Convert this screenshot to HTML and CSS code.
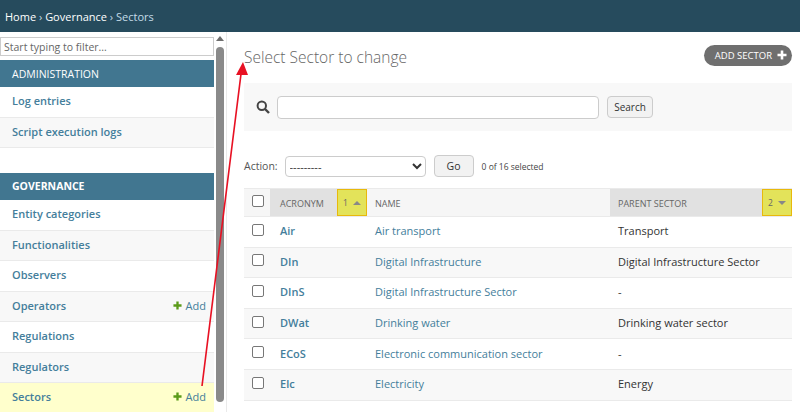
FILE: index.html
```html
<!DOCTYPE html>
<html>
<head lang="en">
    <meta charset="UTF-8">
    <title>Select Sector to change</title>
    <link rel="stylesheet" href="styles.css">
</head>
<body>
<div class="breadcrumbs"><a>Home</a> › <a>Governance</a> › <span>Sectors</span></div>
<div class="page">
    <div class="sidebar">
        <div class="nav">
            <input class="nav-filter" type="text" placeholder="Start typing to filter...">
            <div class="caption">ADMINISTRATION</div>
            <div class="nav-row"><a>Log entries</a></div>
            <div class="nav-row alt"><a>Script execution logs</a></div>
            <div class="caption second">GOVERNANCE</div>
            <div class="nav-row"><a>Entity categories</a></div>
            <div class="nav-row alt"><a>Functionalities</a></div>
            <div class="nav-row"><a>Observers</a></div>
            <div class="nav-row alt"><a>Operators</a><a class="add"><svg class="plus green" viewBox="0 0 10 10"><path d="M5 0.5v9M0.5 5h9"/></svg>Add</a></div>
            <div class="nav-row"><a>Regulations</a></div>
            <div class="nav-row alt"><a>Regulators</a></div>
            <div class="nav-row current"><a>Sectors</a><a class="add"><svg class="plus green" viewBox="0 0 10 10"><path d="M5 0.5v9M0.5 5h9"/></svg>Add</a></div>
        </div>
        <div class="scrollbar">
            <div class="scroll-up"></div>
            <div class="scroll-thumb"></div>
        </div>
    </div>
    <div class="content">
        <div class="title-row">
            <h1>Select Sector to change</h1>
            <a class="addlink">ADD SECTOR<svg class="plus white" viewBox="0 0 10 10"><path d="M5 0.5v9M0.5 5h9"/></svg></a>
        </div>
        <div class="toolbar">
            <svg class="search-icon" width="14" height="14" viewBox="0 0 14 14">
                <circle cx="5.8" cy="5.8" r="4.2" fill="none" stroke="#444" stroke-width="2"/>
                <path d="M9 9l4 4" stroke="#444" stroke-width="2.4"/>
            </svg>
            <input class="search-box" type="text">
            <button class="btn">Search</button>
        </div>
        <div class="actions">
            <label>Action:</label>
            <select class="action-select"><option>---------</option></select>
            <button class="btn">Go</button>
            <span class="counter">0 of 16 selected</span>
        </div>
        <table class="results">
            <thead>
                <tr>
                    <th class="check"><input type="checkbox"></th>
                    <th class="acronym sorted">ACRONYM</th>
                    <th class="sort-cell"><span class="mark">1 <i class="up"></i></span></th>
                    <th class="name">NAME</th>
                    <th class="parent sorted">PARENT SECTOR</th>
                    <th class="sort-cell"><span class="mark">2 <i class="down"></i></span></th>
                </tr>
            </thead>
            <tbody>
                <tr>
                    <td class="check"><input type="checkbox"></td>
                    <td colspan="2"><a class="code">Air</a></td>
                    <td class="text"><a>Air transport</a></td>
                    <td class="text" colspan="2">Transport</td>
                </tr>
                <tr class="alt">
                    <td class="check"><input type="checkbox"></td>
                    <td colspan="2"><a class="code">DIn</a></td>
                    <td class="text"><a>Digital Infrastructure</a></td>
                    <td class="text" colspan="2">Digital Infrastructure Sector</td>
                </tr>
                <tr>
                    <td class="check"><input type="checkbox"></td>
                    <td colspan="2"><a class="code">DInS</a></td>
                    <td class="text"><a>Digital Infrastructure Sector</a></td>
                    <td class="text" colspan="2">-</td>
                </tr>
                <tr class="alt">
                    <td class="check"><input type="checkbox"></td>
                    <td colspan="2"><a class="code">DWat</a></td>
                    <td class="text"><a>Drinking water</a></td>
                    <td class="text" colspan="2">Drinking water sector</td>
                </tr>
                <tr>
                    <td class="check"><input type="checkbox"></td>
                    <td colspan="2"><a class="code">ECoS</a></td>
                    <td class="text"><a>Electronic communication sector</a></td>
                    <td class="text" colspan="2">-</td>
                </tr>
                <tr class="alt">
                    <td class="check"><input type="checkbox"></td>
                    <td colspan="2"><a class="code">Elc</a></td>
                    <td class="text"><a>Electricity</a></td>
                    <td class="text" colspan="2">Energy</td>
                </tr>
            </tbody>
        </table>
    </div>
</div>
<svg class="arrow" width="800" height="412" viewBox="0 0 800 412">
    <path d="M202 386L241 74" stroke="#e81123" stroke-width="1.6" fill="none"/>
    <path d="M243 62L236 75L248 75Z" fill="#e81123"/>
</svg>
</body>
</html>
```

FILE: styles.css
```css
* {
    box-sizing: border-box;
}
html, body {
    margin: 0;
    height: 412px;
    overflow: hidden;
}
body {
    font-family: "Open Sans", "Noto Sans", sans-serif;
    font-size: 11px;
    color: #333;
    background-color: #fff;
    position: relative;
}
a {
    color: #447e9b;
}
.breadcrumbs {
    height: 32px;
    line-height: 34px;
    padding-left: 5px;
    background-color: #264b5d;
    color: #c4dce8;
    font-size: 11px;
}
.breadcrumbs a {
    color: #fff;
}
.breadcrumbs span {
    color: #c4dce8;
}
.page {
    display: flex;
    height: 380px;
}

/* left nav */
.sidebar {
    display: flex;
    width: 227px;
    border-right: 1px solid #eaeaea;
    overflow: hidden;
}
.nav {
    width: 214px;
    padding-top: 5px;
    flex-shrink: 0;
}
.nav-filter {
    display: block;
    width: 214px;
    height: 19px;
    margin-bottom: 4px;
    padding: 0 3px;
    border: 1px solid #ccc;
    font-family: inherit;
    font-size: 10.5px;
}
.nav-filter::placeholder {
    color: #666;
}
.caption {
    height: 27px;
    line-height: 28px;
    padding-left: 12px;
    background-color: #417690;
    color: #fff;
    font-size: 10.5px;
}
.caption.second {
    margin-top: 25px;
    line-height: 27px;
    font-weight: 700;
}
.nav-row {
    display: flex;
    justify-content: space-between;
    height: 30.5px;
    line-height: 28px;
    padding: 0 8px 0 12px;
    border-bottom: 1px solid #eaeaea;
    font-weight: 600;
    background-color: #fff;
}
.nav-row.alt {
    background-color: #f8f8f8;
}
.nav-row.current {
    background-color: #ffffcc;
    border-bottom: 0;
}
.add {
    font-weight: 400;
}
.plus {
    width: 9px;
    height: 9px;
    fill: none;
    stroke-width: 2.6;
}
.plus.green {
    stroke: #5b9b1a;
    margin-right: 4px;
    vertical-align: 0;
}
.plus.white {
    stroke: #fff;
    width: 10px;
    height: 10px;
    margin-left: 5px;
    vertical-align: -1px;
}
.scrollbar {
    width: 12px;
    padding: 4px 2px 0;
}
.scroll-up {
    width: 0;
    height: 0;
    margin: 0 auto 6px;
    border-left: 4px solid transparent;
    border-right: 4px solid transparent;
    border-bottom: 5px solid #6e6e6e;
}
.scroll-thumb {
    width: 8px;
    height: 355px;
    border-radius: 4px;
    background-color: #8a8a8a;
}

/* main column */
.content {
    flex: 1;
    padding: 13px 8px 0 17px;
    min-width: 0;
}
.title-row {
    display: flex;
    justify-content: space-between;
    height: 38px;
}
h1 {
    margin: 0;
    font-size: 15.5px;
    font-weight: 300;
    line-height: 24px;
    color: #666;
}
.addlink {
    height: 21px;
    line-height: 21px;
    padding: 0 5px 0 11px;
    border-radius: 11px;
    background-color: #6f6f6f;
    color: #fff;
    font-size: 9.5px;
}
.toolbar {
    display: flex;
    align-items: center;
    height: 48px;
    padding-left: 12px;
    background-color: #f8f8f8;
}
.search-icon {
    margin-right: 7px;
}
.search-box {
    width: 322px;
    height: 23px;
    border: 1px solid #ccc;
    border-radius: 4px;
}
.btn {
    height: 22px;
    padding: 0 6px;
    border: 1px solid #ccc;
    border-radius: 4px;
    background-color: #f2f2f2;
    font-family: inherit;
    font-size: 10px;
    color: #333;
}
.toolbar .btn {
    width: 46px;
    margin-left: 8px;
}
.actions {
    display: flex;
    align-items: center;
    height: 22px;
    margin-top: 24px;
    font-size: 10.5px;
    color: #555;
}
.action-select {
    width: 141px;
    height: 21px;
    margin: 0 8px 0 7px;
    border: 1px solid #ccc;
    border-radius: 4px;
    background-color: #fff;
    font-family: inherit;
    font-size: 11px;
    color: #333;
}
.actions .btn {
    width: 40px;
    font-size: 10.5px;
}
.counter {
    margin-left: 8px;
    font-size: 8.5px;
    color: #444;
}
.results {
    width: 548px;
    margin-top: 11px;
    border-collapse: collapse;
    table-layout: fixed;
}
.results th {
    height: 27px;
    padding: 1px 0 0 10px;
    background-color: #f6f6f6;
    border-top: 1px solid #eaeaea;
    border-bottom: 1px solid #eaeaea;
    font-size: 9px;
    font-weight: 400;
    color: #666;
    text-align: left;
}
.results th.sorted {
    background-color: #e1e1e1;
}
.results .check {
    width: 26px;
    padding: 0 0 4px 8px;
}
.results input[type="checkbox"] {
    display: block;
    width: 12px;
    height: 12px;
    margin: 0;
    appearance: none;
    border: 1px solid #777;
    border-radius: 2px;
    background-color: #fff;
}
.results .acronym {
    width: 67px;
}
.results .name {
    width: 243px;
    padding-left: 8px;
}
.results .parent {
    width: 152px;
    padding-left: 8px;
}
.results th.sort-cell {
    width: 30px;
    padding: 0;
    background-color: #e1e1e1;
}
.mark {
    display: block;
    height: 27px;
    line-height: 25px;
    padding-left: 5px;
    border: 1px solid #e8b90c;
    background-color: #e3e35a;
    font-size: 8.5px;
    color: #666;
}
.mark i {
    display: inline-block;
    width: 0;
    height: 0;
    margin-left: 3px;
    border-left: 4px solid transparent;
    border-right: 4px solid transparent;
    vertical-align: 1px;
}
.mark .up {
    border-bottom: 4px solid #888;
}
.mark .down {
    border-top: 4px solid #888;
}
.results td {
    height: 30.6px;
    padding: 0 0 2px 10px;
    border-bottom: 1px solid #eaeaea;
    font-size: 11px;
}
.results td.text {
    padding-left: 8px;
}
.results td.check {
    padding: 0 0 4px 8px;
}
.results tr.alt td {
    background-color: #f8f8f8;
}
.code {
    font-weight: 600;
}

/* annotation drawn over the page */
.arrow {
    position: absolute;
    left: 0;
    top: 0;
    pointer-events: none;
}
```
